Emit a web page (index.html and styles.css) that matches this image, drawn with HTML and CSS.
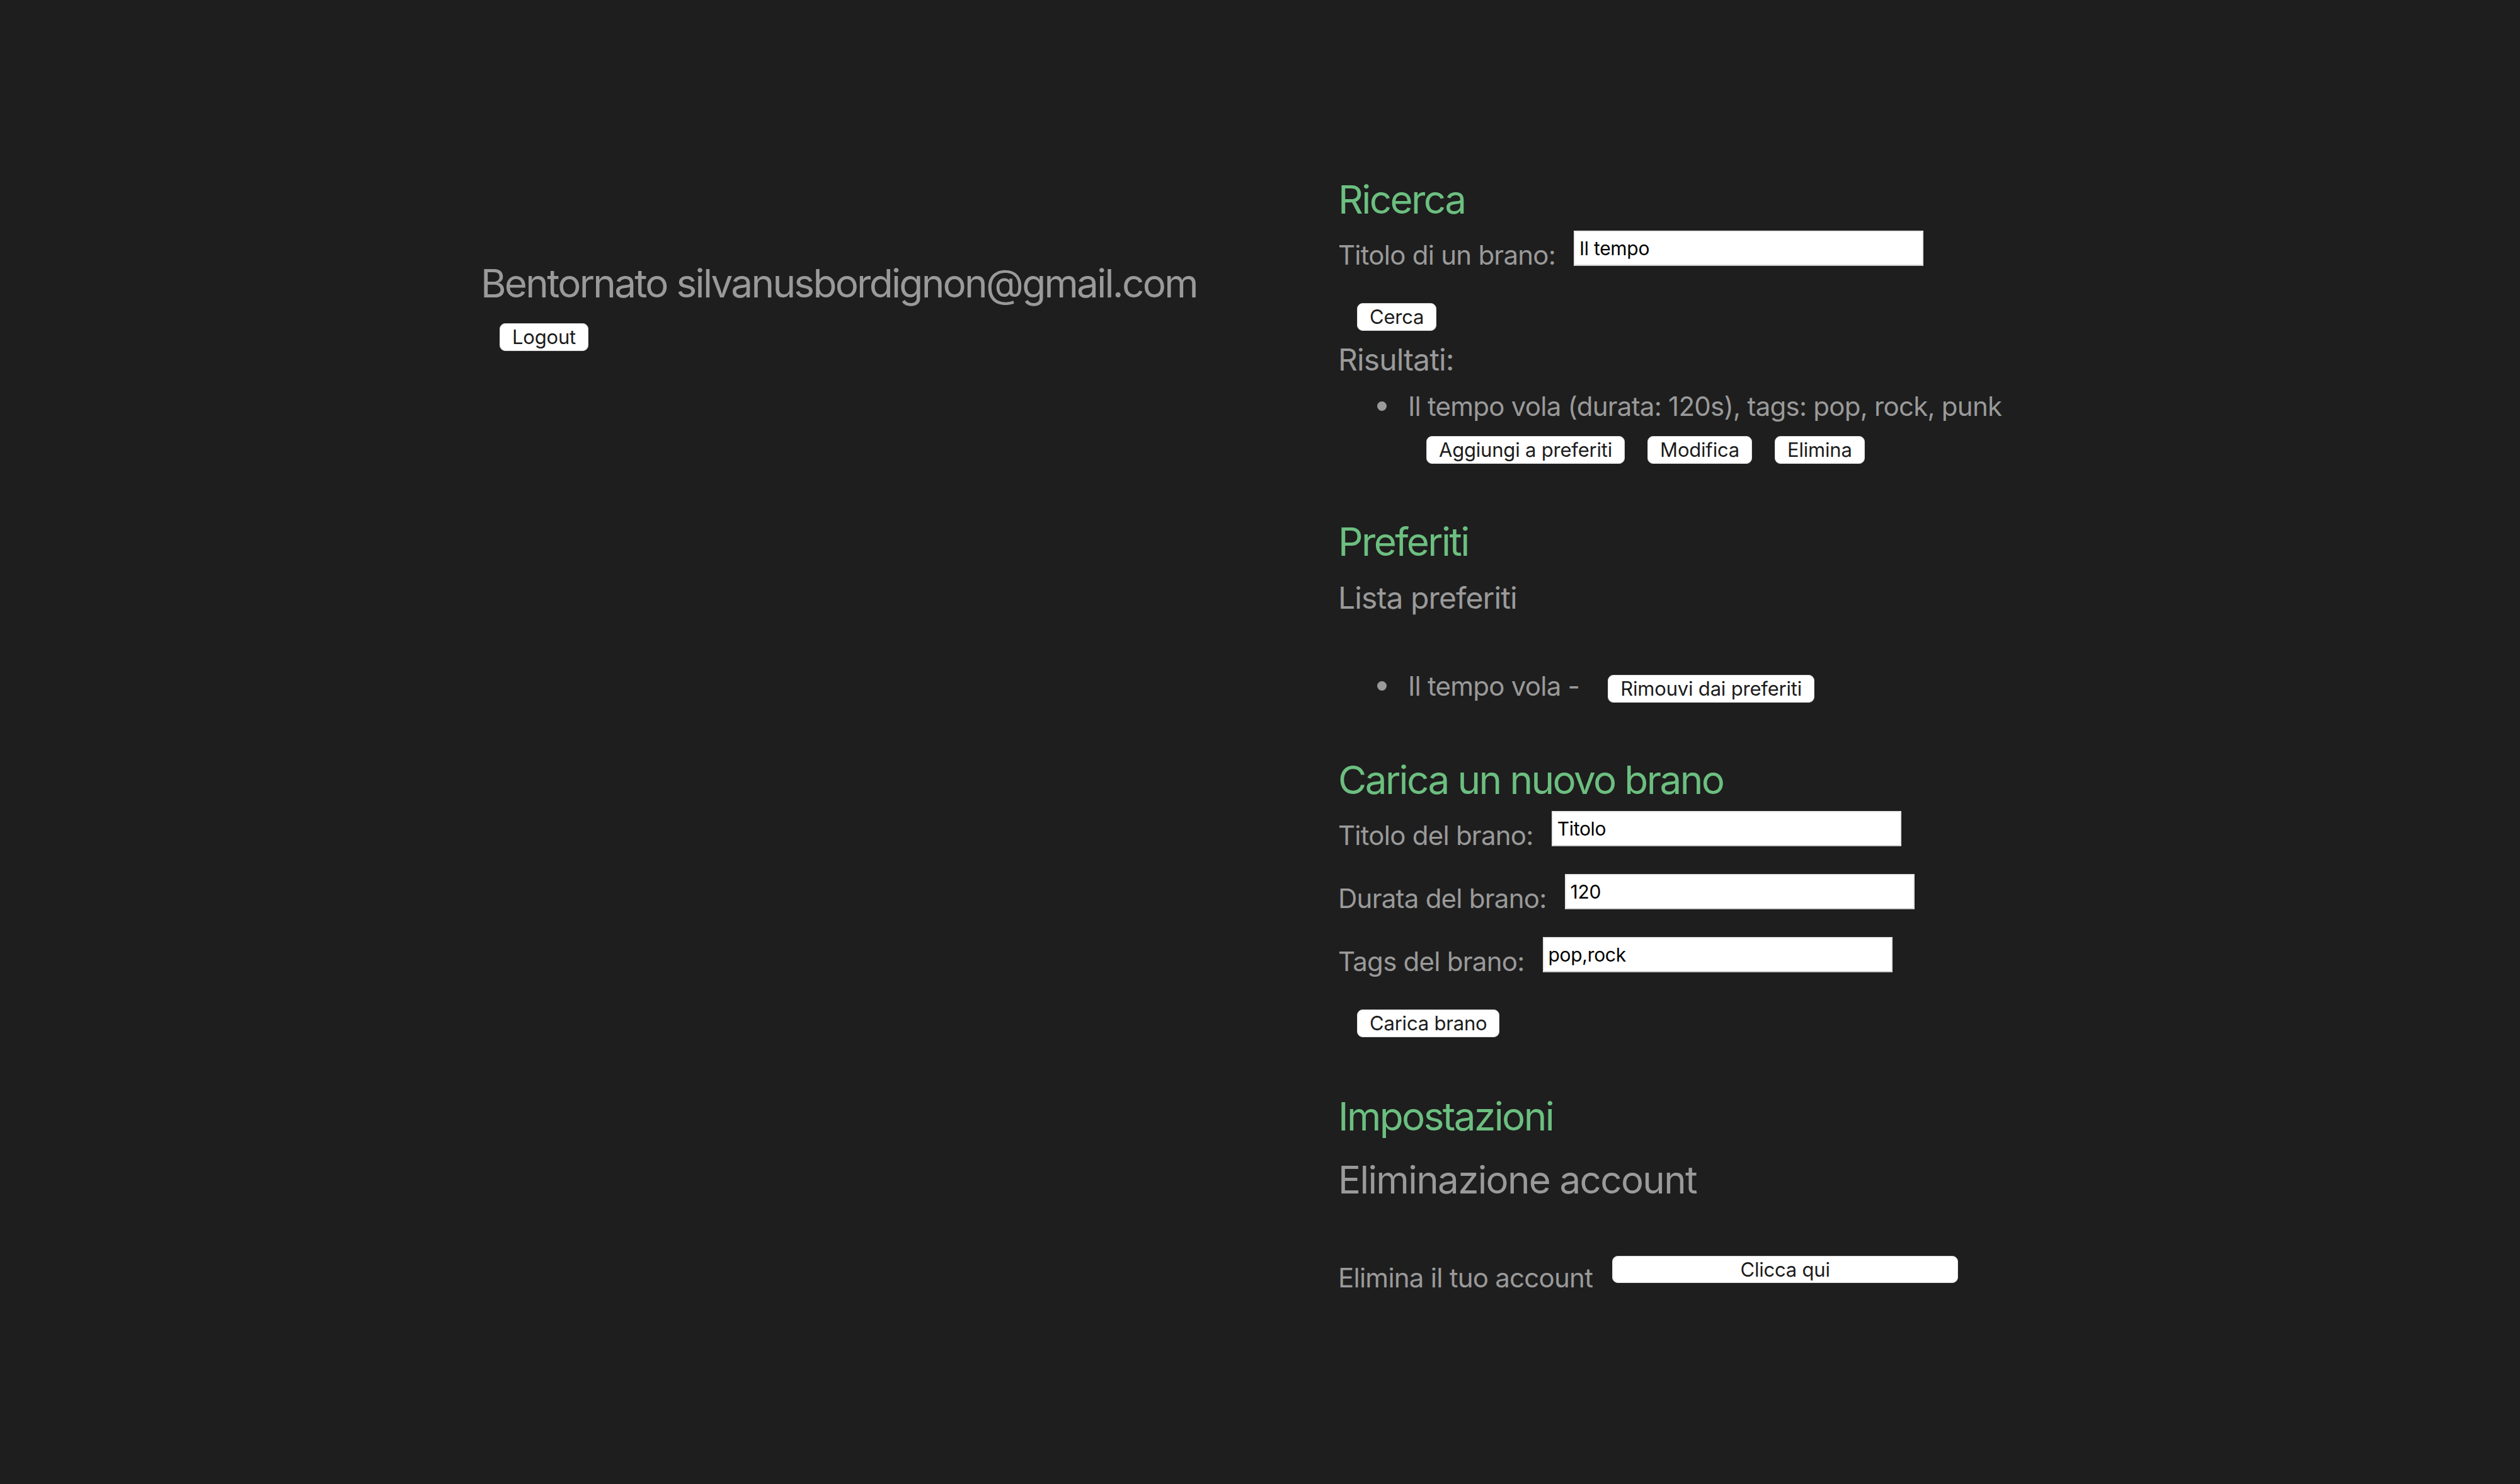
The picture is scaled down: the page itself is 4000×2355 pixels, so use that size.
FILE: index.html
```html
<!DOCTYPE html>
<html lang="it">
<head>
<meta charset="utf-8">
<title>Area personale</title>
<link rel="stylesheet" href="styles.css">
</head>
<body>
<div class="page">
  <div class="left">
    <h2 class="welcome">Bentornato silvanusbordignon@gmail.com</h2>
    <button class="btn btn-logout">Logout</button>
  </div>
  <div class="right">
    <h2 class="section">Ricerca</h2>
    <div class="field field-first">
      <label>Titolo di un brano:</label>
      <input class="input" type="text" value="Il tempo">
    </div>
    <button class="btn btn-submit">Cerca</button>
    <h3 class="sub sub-results">Risultati:</h3>
    <ul class="list list-results">
      <li class="item">Il tempo vola (durata: 120s), tags: pop, rock, punk
        <div class="actions">
          <button class="btn">Aggiungi a preferiti</button>
          <button class="btn">Modifica</button>
          <button class="btn">Elimina</button>
        </div>
      </li>
    </ul>

    <h2 class="section section-fav">Preferiti</h2>
    <h3 class="sub sub-fav">Lista preferiti</h3>
    <ul class="list list-fav">
      <li class="item">Il tempo vola - <button class="btn btn-remove">Rimouvi dai preferiti</button></li>
    </ul>

    <h2 class="section section-upload">Carica un nuovo brano</h2>
    <div class="field field-first">
      <label>Titolo del brano:</label>
      <input class="input" type="text" value="Titolo">
    </div>
    <div class="field">
      <label>Durata del brano:</label>
      <input class="input" type="text" value="120">
    </div>
    <div class="field">
      <label>Tags del brano:</label>
      <input class="input" type="text" value="pop,rock">
    </div>
    <button class="btn btn-submit">Carica brano</button>

    <h2 class="section section-settings">Impostazioni</h2>
    <h2 class="account-title">Eliminazione account</h2>
    <div class="field field-delete">
      <label>Elimina il tuo account</label>
      <button class="btn btn-wide">Clicca qui</button>
    </div>
  </div>
</div>
</body>
</html>
```
FILE: styles.css
```css
* {
  box-sizing: border-box;
}

body {
  margin: 0;
  background: #1e1e1e;
  color: #9a9a9a;
  font-family: Inter, "Noto Sans", sans-serif;
  font-size: 42px;
  line-height: 51px;
  letter-spacing: -0.75px;
}

.page {
  display: flex;
  align-items: flex-start;
  min-height: 2355px;
  padding: 279px 0 0 763px;
}

.left {
  width: 1361px;
  padding-top: 133px;
  display: flex;
  flex-direction: column;
  align-items: flex-start;
}

.welcome {
  margin: 0;
  font-size: 62px;
  line-height: 75px;
  font-weight: 400;
  letter-spacing: -2.7px;
  color: #9a9a9a;
  white-space: nowrap;
}

.right {
  display: flex;
  flex-direction: column;
  align-items: flex-start;
}

.section {
  margin: 0;
  font-size: 62px;
  line-height: 75px;
  font-weight: 400;
  letter-spacing: -2.6px;
  color: #6cbf80;
}

.section-fav {
  margin-top: 86px;
}

.section-upload {
  margin-top: 85px;
}

.section-settings {
  margin-top: 88px;
}

.account-title {
  margin: 27px 0 0;
  font-size: 60px;
  line-height: 72px;
  font-weight: 400;
  letter-spacing: -1.6px;
  color: #9a9a9a;
}

.sub {
  margin: 0;
  font-size: 48px;
  line-height: 58px;
  font-weight: 400;
  letter-spacing: -0.9px;
  color: #9a9a9a;
}

.sub-results {
  margin-top: 17px;
}

.sub-fav {
  margin-top: 23px;
}

.field {
  display: flex;
  align-items: flex-start;
  gap: 29px;
  margin-top: 36px;
}

.field label {
  margin-top: 13px;
  white-space: nowrap;
}

.field-first {
  margin-top: 12px;
}

.field-delete {
  margin-top: 85px;
  gap: 31px;
}

.field-delete label {
  margin-top: 9px;
}

.input {
  width: 555px;
  height: 56px;
  margin: 0;
  padding: 0 7px;
  background: #fff;
  color: #000;
  font-family: Inter, "Noto Sans", sans-serif;
  font-size: 30px;
  letter-spacing: -0.3px;
  border: 2px solid;
  border-color: #e9e9e9 #e6e6e6 #cdcdcd #e6e6e6;
  border-radius: 0;
  outline: none;
}

.btn {
  margin: 0;
  padding: 2px 19px;
  background: #fff;
  color: #1c1c1c;
  font-family: Inter, "Noto Sans", sans-serif;
  font-size: 31px;
  line-height: 38px;
  letter-spacing: -0.2px;
  border: 1px solid #dcdcdc;
  border-radius: 9px;
  white-space: nowrap;
}

.btn-logout {
  margin: 26px 0 0 30px;
}

.btn-submit {
  margin: 51px 0 0 30px;
}

.btn-wide {
  width: 549px;
  height: 43px;
  padding: 0;
  line-height: 37px;
}

.list {
  margin: 0;
  padding: 0 0 0 111px;
  list-style: none;
}

.list-results {
  margin-top: 19px;
}

.list-fav {
  margin-top: 85px;
}

.item::before {
  content: "";
  display: inline-block;
  width: 15px;
  height: 15px;
  margin: 0 34px 0 -49px;
  border-radius: 50%;
  background: #9a9a9a;
  vertical-align: 8px;
}

.actions {
  display: flex;
  gap: 36px;
  margin-top: 22px;
  padding-left: 29px;
}

.btn-remove {
  margin-left: 34px;
}
```
